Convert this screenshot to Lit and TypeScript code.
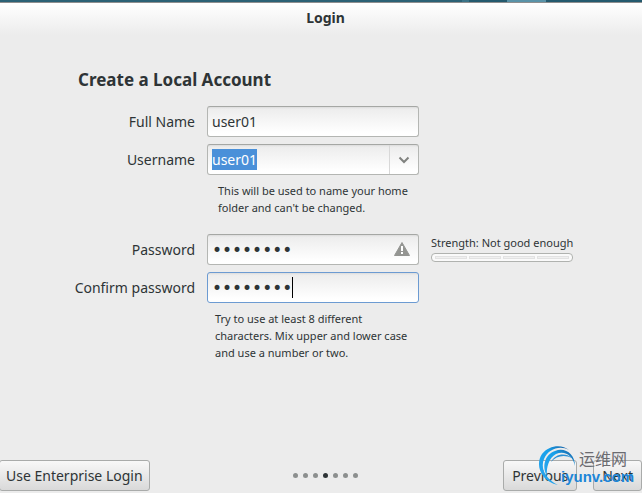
import { LitElement, html, css, svg } from "lit";
import { customElement } from "lit/decorators.js";
import { classMap } from "lit/directives/class-map.js";

@customElement("page-dots")
class PageDots extends LitElement {
  static styles = css`
    :host { display: flex; gap: 5px; }
    .dot { width: 5px; height: 5px; border-radius: 50%; background: #8c8f8e; }
    .current { background: #2e3436; }
  `;
  render() {
    return [0, 1, 2, 3, 4, 5, 6].map(
      (i) => html`<span class=${classMap({ dot: true, current: i === 3 })}></span>`
    );
  }
}

@customElement("site-watermark")
class SiteWatermark extends LitElement {
  static styles = css`
    :host { display: block; width: 100px; height: 44px; position: relative; pointer-events: none; }
    .swirl { display: block; width: 40px; height: 44px; }
    .cn { position: absolute; left: 41px; top: 1px; font: 16px/24px "Noto Sans CJK SC", sans-serif; color: #6b6b70; white-space: nowrap; }
    .domain { position: absolute; left: 23px; top: 22px; font: bold 15px/20px "Liberation Sans", sans-serif; color: #1c86d8; white-space: nowrap; }
  `;
  render() {
    return html`
      <svg class="swirl" viewBox="0 0 40 44" aria-hidden="true">
        <defs>
          <linearGradient id="sweep" x1="0" y1="1" x2="1" y2="0">
            <stop offset="0" stop-color="#2ba6ee" />
            <stop offset="0.6" stop-color="#18a0ea" />
            <stop offset="1" stop-color="#1a5a9c" />
          </linearGradient>
        </defs>
        ${svg`
          <path d="M31 5C24 -1 11 0 4 9C-3 19 2 36 20 40C8 34 2 24 6 14C10 4 22 0 31 5Z" fill="url(#sweep)" />
          <path d="M37 21C37 9 27 2 17 6C6 10 4 22 9 31C8 22 11 13 18 9C27 5 35 11 37 21Z" fill="url(#sweep)" />
          <path d="M34 13C27 7 17 9 13 17C18 11 26 9 34 13Z" fill="#2a8fd4" />
        `}
      </svg>
      <span class="cn">运维网</span>
      <span class="domain">iyunv.com</span>
    `;
  }
}

@customElement("app-root")
class AppRoot extends LitElement {
  static styles = css`
    :host {
      display: flex; flex-direction: column; box-sizing: border-box; min-height: 100vh;
      position: relative; overflow: hidden; background: #ececec; color: #2e3436;
      font: 14px/20px "Noto Sans", sans-serif;
    }
    .desktop {
      height: 2px; border-bottom: 1px solid #8f8f8f;
      background: linear-gradient(90deg, #2b6175 0 72%, #3a7387 72% 73%, #245a6e 73% 79%, #5a93a8 79% 85%, #245a6e 85%);
    }
    .title {
      margin: 0; padding: 5px 0 7px 9px; text-align: center; font-size: 14px; line-height: 20px;
      font-weight: bold; background: linear-gradient(#ffffff, #ececec);
    }
    form { display: flex; flex-direction: column; flex: 1; }
    .account {
      display: grid; grid-template-columns: 117px 212px auto; justify-content: start;
      column-gap: 12px; row-gap: 7px; padding: 33px 24px 24px 78px;
    }
    h2 { grid-column: 1 / -1; margin: 0 0 7px; font-size: 17px; line-height: 24px; }
    .label { grid-column: 1; justify-self: end; padding: 6px 0 5px; white-space: nowrap; }
    .field {
      grid-column: 2; display: flex; align-items: center; box-sizing: border-box; height: 31px;
      border: 1px solid #b4b6b3; border-top-color: #a5a7a4; border-radius: 3px; overflow: hidden;
      background: linear-gradient(#dcdcdc 0, #ededed 2px, #ffffff 90%);
    }
    .field.focused { border-color: #6c9bd2; }
    input {
      appearance: none; box-sizing: border-box; min-width: 0; height: 21px; margin: 0; padding: 0;
      border: 0; outline: 0; background: none; color: inherit; font: inherit;
    }
    .wide { flex: 1; margin-left: 4px; }
    .selected { field-sizing: content; margin: 0 auto 0 4px; background: #4a90d9; color: #ffffff; }
    .secret { font-family: "DejaVu Sans", sans-serif; font-size: 17px; }
    .caret { field-sizing: content; margin-left: 4px; border-right: 1px solid #000000; }
    button { font: inherit; color: inherit; box-sizing: border-box; }
    .drop {
      display: flex; align-items: center; justify-content: center; width: 29px; height: 29px; padding: 0;
      border: 0; border-left: 1px solid #d8d8d8; background: none;
    }
    .warning { width: 16px; height: 14px; margin: 0 8px 2px; }
    .hint { grid-column: 2; margin: 0; font-size: 11px; line-height: 17px; }
    .name-hint { padding: 0 0 11px 11px; }
    .password-hint { padding: 0 0 0 8px; white-space: nowrap; }
    .strength { font-size: 11px; line-height: 17px; white-space: nowrap; }
    .meter {
      display: flex; gap: 2px; box-sizing: border-box; width: 142px; height: 9px; margin-top: 2px; padding: 2px 3px;
      border: 1px solid #b0b2af; border-radius: 4px; background: #fafafa;
    }
    .step { flex: 1; box-sizing: border-box; border: 1px solid #e2e2e2; background: #f0f0f0; }
    footer {
      display: grid; grid-template-columns: 1fr auto 1fr; align-items: center; margin: auto 0 2px -1px;
    }
    .action {
      height: 31px; padding: 0 8px; border: 1px solid #a9abaa; border-radius: 3px; white-space: nowrap;
      background: linear-gradient(#f8f8f8, #d9d9d9);
    }
    .start { justify-self: start; padding: 0 6px; }
    page-dots { padding-left: 10px; }
    .nav { display: flex; gap: 16px; justify-self: end; }
    .mark { position: absolute; right: 4px; bottom: 4px; }
  `;
  render() {
    return html`
      <div class="desktop"></div>
      <h1 class="title">Login</h1>
      <form @submit=${(e: Event) => e.preventDefault()}>
        <div class="account">
          <h2>Create a Local Account</h2>
          <label class="label" for="full">Full Name</label>
          <div class="field"><input class="wide" id="full" type="text" value="user01" /></div>

          <label class="label" for="user">Username</label>
          <div class="field">
            <input class="selected" id="user" type="text" value="user01" />
            <button class="drop" type="button" aria-label="Suggested usernames">
              <svg width="12" height="8" viewBox="0 0 12 8"><path d="M1.500 1.500L6 6L10.500 1.500" fill="none" stroke="#80827f" stroke-width="2" /></svg>
            </button>
          </div>
          <p class="hint name-hint">This will be used to name your home folder and can't be changed.</p>

          <label class="label" for="pass">Password</label>
          <div class="field">
            <input class="wide secret" id="pass" type="password" value="password" />
            <svg class="warning" viewBox="0 0 16 14" aria-hidden="true">
              <path d="M8 0.500L15.500 13.500H0.500Z" fill="#949592" stroke="#949592" stroke-linejoin="round" />
              <path d="M7 4H9V9H7ZM7 10H9V12H7Z" fill="#ffffff" />
            </svg>
          </div>
          <div class="strength">
            <span id="strength">Strength: Not good enough</span>
            <div class="meter" role="meter" aria-labelledby="strength" aria-valuemin="0" aria-valuemax="4" aria-valuenow="0">
              ${[0, 1, 2, 3].map(() => html`<span class="step"></span>`)}
            </div>
          </div>

          <label class="label" for="confirm">Confirm password</label>
          <div class="field focused"><input class="secret caret" id="confirm" type="password" value="password" /></div>
          <p class="hint password-hint">Try to use at least 8 different<br />characters. Mix upper and lower case<br />and use a number or two.</p>
        </div>
        <footer>
          <button class="action start" type="button">Use Enterprise Login</button>
          <page-dots></page-dots>
          <div class="nav">
            <button class="action" type="button">Previous</button>
            <button class="action" type="submit">Next</button>
          </div>
        </footer>
      </form>
      <site-watermark class="mark"></site-watermark>
    `;
  }
}
